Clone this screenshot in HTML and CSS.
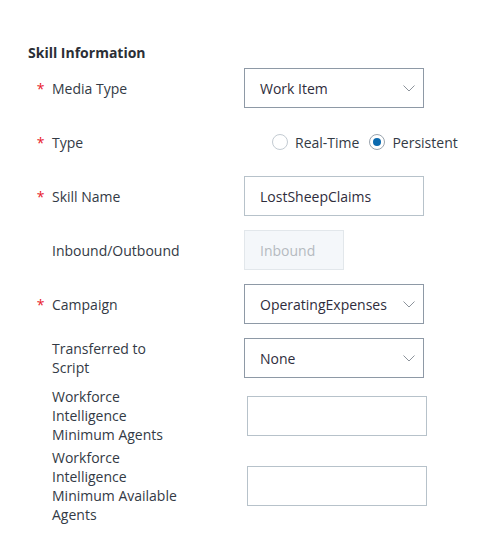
FILE: index.html
```html
<!DOCTYPE html>
<html>
<head>
<meta charset="utf-8">
<link rel="stylesheet" href="styles.css">
</head>
<body>
<div class="form">
  <h2 class="title">Skill Information</h2>

  <div class="row">
    <span class="star">*</span>
    <span class="label">Media Type</span>
    <div class="select"><span>Work Item</span><svg class="chev" width="12" height="7" viewBox="0 0 12 7"><path d="M0.5 0.5 L6 6 L11.5 0.5" fill="none" stroke="#8c939b" stroke-width="1"/></svg></div>
  </div>

  <div class="row">
    <span class="star">*</span>
    <span class="label">Type</span>
    <div class="radios">
      <span class="radio"></span><span class="rlabel">Real-Time</span>
      <span class="radio on"></span><span class="rlabel">Persistent</span>
    </div>
  </div>

  <div class="row">
    <span class="star">*</span>
    <span class="label">Skill Name</span>
    <div class="input">LostSheepClaims</div>
  </div>

  <div class="row">
    <span class="star"></span>
    <span class="label">Inbound/Outbound</span>
    <div class="input disabled">Inbound</div>
  </div>

  <div class="row">
    <span class="star">*</span>
    <span class="label">Campaign</span>
    <div class="select"><span>OperatingExpenses</span><svg class="chev" width="12" height="7" viewBox="0 0 12 7"><path d="M0.5 0.5 L6 6 L11.5 0.5" fill="none" stroke="#8c939b" stroke-width="1"/></svg></div>
  </div>

  <div class="row r6">
    <span class="star"></span>
    <span class="label">Transferred to Script</span>
    <div class="select"><span>None</span><svg class="chev" width="12" height="7" viewBox="0 0 12 7"><path d="M0.5 0.5 L6 6 L11.5 0.5" fill="none" stroke="#8c939b" stroke-width="1"/></svg></div>
  </div>

  <div class="row r7">
    <span class="star"></span>
    <span class="label">Workforce Intelligence Minimum Agents</span>
    <div class="input wfi"></div>
  </div>

  <div class="row">
    <span class="star"></span>
    <span class="label">Workforce Intelligence Minimum Available Agents</span>
    <div class="input wfi"></div>
  </div>
</div>
</body>
</html>
```

FILE: styles.css
```css
html, body {
  margin: 0;
  padding: 0;
  background: #ffffff;
}
body {
  font-family: "Open Sans", "Noto Sans", sans-serif;
  font-size: 14px;
  color: #333a45;
}
.form {
  padding: 43px 0 0 28px;
}
.title {
  margin: 0 0 6px 0;
  font-size: 14px;
  line-height: 19px;
  font-weight: 700;
  color: #2b2f36;
}
.row {
  display: grid;
  grid-template-columns: 24px 192px auto;
  align-items: center;
  margin-bottom: 14px;
}
.row.r6 { margin-bottom: 9px; }
.row.r7 { margin-bottom: 4px; }
.star {
  color: #e8202a;
  font-size: 14px;
  line-height: 19px;
  text-align: center;
  padding-left: 1px;
}
.label {
  line-height: 19px;
  max-width: 132px;
  color: #333a45;
}
.select, .input {
  box-sizing: border-box;
  width: 180px;
  height: 40px;
  display: flex;
  align-items: center;
  justify-content: space-between;
  padding: 0 7px 0 15px;
  line-height: 19px;
  color: #2f2d3c;
}
.select {
  border: 1px solid #8e99a6;
}
.input {
  border: 1px solid #b7c2ca;
}
.input.disabled {
  width: 100px;
  background: #f4f7fa;
  border-color: #e2e7eb;
  color: #b5bac0;
}
.input.wfi {
  margin-left: 3px;
}
.chev {
  display: block;
  margin-right: 1px;
}
.radios {
  display: flex;
  align-items: center;
  height: 40px;
  padding-left: 28px;
}
.radio {
  box-sizing: border-box;
  width: 16px;
  height: 16px;
  border-radius: 50%;
  border: 1px solid #c3cbd2;
  display: flex;
  align-items: center;
  justify-content: center;
  margin-right: 7px;
}
.radio.on {
  border-color: #9aa4ae;
}
.radio.on::after {
  content: "";
  width: 8px;
  height: 8px;
  border-radius: 50%;
  background: #0b6aaf;
}
.rlabel {
  line-height: 19px;
  margin-right: 10px;
}
```
